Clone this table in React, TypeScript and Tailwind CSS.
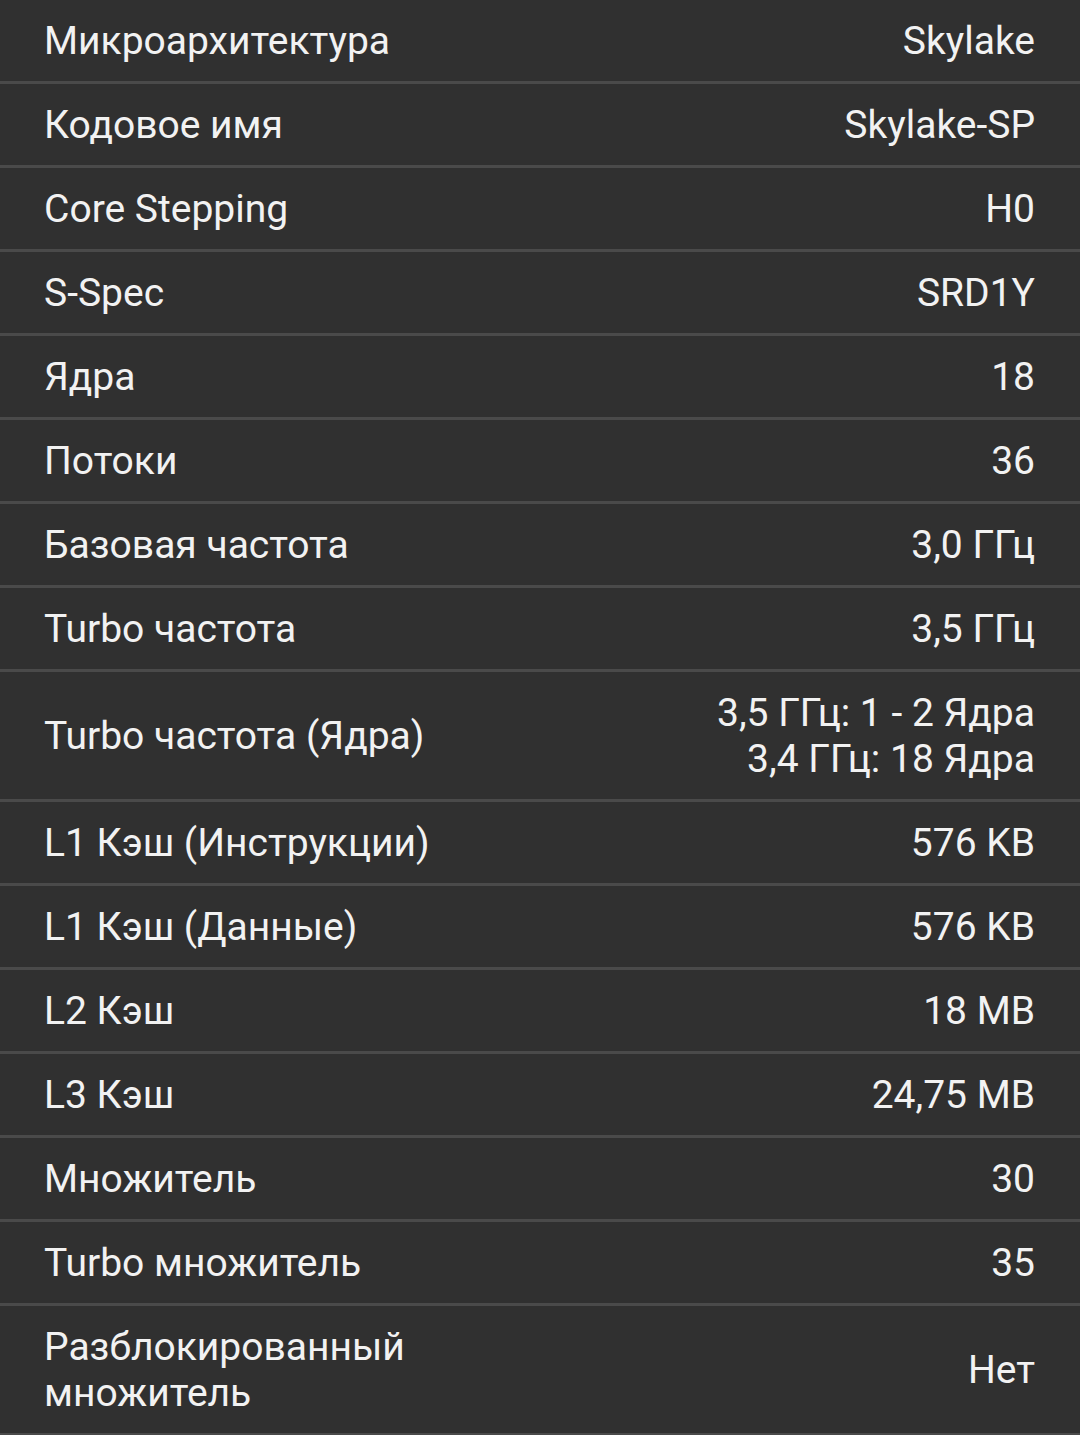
const specs: [string, string[]][] = [
  ["Микроархитектура", ["Skylake"]],
  ["Кодовое имя", ["Skylake-SP"]],
  ["Core Stepping", ["H0"]],
  ["S-Spec", ["SRD1Y"]],
  ["Ядра", ["18"]],
  ["Потоки", ["36"]],
  ["Базовая частота", ["3,0 ГГц"]],
  ["Turbo частота", ["3,5 ГГц"]],
  ["Turbo частота (Ядра)", ["3,5 ГГц: 1 - 2 Ядра", "3,4 ГГц: 18 Ядра"]],
  ["L1 Кэш (Инструкции)", ["576 KB"]],
  ["L1 Кэш (Данные)", ["576 KB"]],
  ["L2 Кэш", ["18 MB"]],
  ["L3 Кэш", ["24,75 MB"]],
  ["Множитель", ["30"]],
  ["Turbo множитель", ["35"]],
  ["Разблокированный множитель", ["Нет"]],
];

export default function App() {
  return (
    <div
      className="w-[1080px] h-[1435px] bg-[#303030] text-[#f2f2f2] overflow-hidden"
      style={{ fontFamily: "Roboto, 'Noto Sans', sans-serif" }}
    >
      {specs.map(([label, value]) => (
        <div
          key={label}
          className="flex items-center justify-between pl-[44px] pr-[45px] py-[17.5px] border-b-[3px] border-[#4a4a4a] text-[39px] leading-[46px]"
        >
          <div className="w-[480px]">{label}</div>
          <div className="text-right">
            {value.map((v) => (
              <div key={v}>{v}</div>
            ))}
          </div>
        </div>
      ))}
    </div>
  );
}
